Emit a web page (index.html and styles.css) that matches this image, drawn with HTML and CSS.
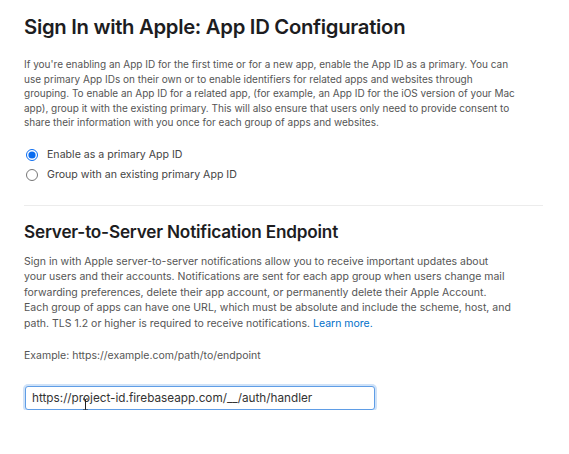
FILE: index.html
```html
<!DOCTYPE html>
<html>

<head>
	<title>Sign In with Apple: App ID Configuration</title>
	<link rel="stylesheet" href="styles.css">
</head>

<body>
	<div class="page">
		<h1>Sign In with Apple: App ID Configuration</h1>
		<p class="intro">
			If you're enabling an App ID for the first time or for a new app, enable the App ID as a primary. You can<br>
			use primary App IDs on their own or to enable identifiers for related apps and websites through<br>
			grouping. To enable an App ID for a related app, (for example, an App ID for the iOS version of your Mac<br>
			app), group it with the existing primary. This will also ensure that users only need to provide consent to<br>
			share their information with you once for each group of apps and websites.
		</p>

		<div class="options">
			<label class="option">
				<input type="radio" name="mode" checked>
				<span>Enable as a primary App ID</span>
			</label>
			<label class="option">
				<input type="radio" name="mode">
				<span>Group with an existing primary App ID</span>
			</label>
		</div>

		<hr class="divider">

		<h2>Server-to-Server Notification Endpoint</h2>
		<p class="intro notes">
			Sign in with Apple server-to-server notifications allow you to receive important updates about<br>
			your users and their accounts. Notifications are sent for each app group when users change mail<br>
			forwarding preferences, delete their app account, or permanently delete their Apple Account.<br>
			Each group of apps can have one URL, which must be absolute and include the scheme, host, and<br>
			path. TLS 1.2 or higher is required to receive notifications. <a href="#">Learn more.</a>
		</p>

		<p class="example">Example: https://example.com/path/to/endpoint</p>

		<div class="field">
			<input type="text" class="endpoint" value="https://project-id.firebaseapp.com/__/auth/handler" autofocus>
			<svg class="ibeam" width="7" height="13" viewBox="0 0 7 13">
				<path d="M1 1h2l0.5 0.5L4 1h2M3.5 1.5v10M1 12h2l0.5-0.5L4 12h2" fill="none" stroke="#222" stroke-width="1"/>
			</svg>
		</div>
	</div>
</body>

</html>
```

FILE: styles.css
```css
body {
	margin: 0;
	background-color: #fff;
	font-family: Inter, "Noto Sans", sans-serif;
	color: #1d1d1f;
}

.page {
	padding: 15px 24px 0 24px;
}

h1 {
	margin: 0;
	font-size: 20.3px;
	line-height: 24px;
	font-weight: 600;
	letter-spacing: -0.3px;
}

h2 {
	margin: 16px 0 0 0;
	font-size: 17.2px;
	line-height: 20px;
	font-weight: 600;
	letter-spacing: -0.2px;
}

.intro {
	margin: 18px 0 0 0;
	font-size: 10px;
	line-height: 14.5px;
	color: #555;
	white-space: nowrap;
}

.intro.notes {
	margin-top: 12px;
	font-size: 10.5px;
	line-height: 15.5px;
}

.intro a {
	color: #0070c9;
	text-decoration: none;
}

.options {
	margin-top: 15px;
}

.option {
	display: flex;
	align-items: center;
	height: 20px;
	font-size: 10.6px;
	color: #444;
}

.option input {
	margin: 0 9px 0 2px;
	width: 12px;
	height: 12px;
	accent-color: #0a6cf0;
}

.divider {
	margin: 20px 2px 0 0;
	border: none;
	border-top: 1px solid #ececec;
}

.example {
	margin: 17px 0 0 0;
	font-size: 10.5px;
	line-height: 15px;
	color: #555;
}

.field {
	position: relative;
	margin-top: 23px;
	width: 350px;
}

.endpoint {
	box-sizing: border-box;
	width: 350px;
	height: 24px;
	margin: 0 0 0 1px;
	padding: 0 6px;
	font-family: Inter, "Noto Sans", sans-serif;
	font-size: 11.75px;
	color: #333;
	border: 1px solid #5f9de6;
	border-radius: 3px;
	box-shadow: 0 0 0 2px #cfe2f8;
	outline: none;
}

.ibeam {
	position: absolute;
	left: 58px;
	top: 12px;
}
```
